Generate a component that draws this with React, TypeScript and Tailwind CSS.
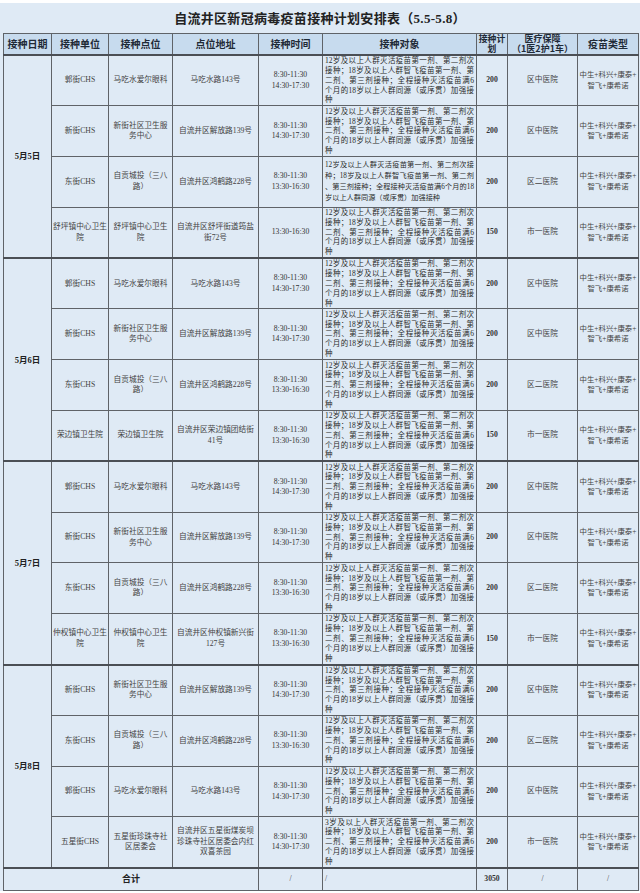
import React from "react";

const A = [
  "12岁及以上人群灭活疫苗第一剂、第二剂次",
  "接种；18岁及以上人群智飞疫苗第一剂、第",
  "二剂、第三剂接种；全程接种灭活疫苗满6",
  "个月的18岁以上人群同源（或序贯）加强接",
  "种",
];
const B = [
  "12岁及以上人群灭活疫苗第一剂、第二剂次接",
  "种；18岁及以上人群智飞疫苗第一剂、第二剂",
  "、第三剂接种；全程接种灭活疫苗满6个月的18",
  "岁以上人群同源（或序贯）加强接种",
];
const C = [
  "3岁及以上人群灭活疫苗第一剂、第二剂次",
  "接种；18岁及以上人群智飞疫苗第一剂、第",
  "二剂、第三剂接种；全程接种灭活疫苗满6",
  "个月的18岁以上人群同源（或序贯）加强接",
  "种",
];

type Row = {
  unit: string[];
  site: string[];
  addr: string[];
  time: string[];
  target: string[];
  plan: string;
  med: string;
};

const T1 = ["8:30-11:30", "14:30-17:30"];
const T2 = ["8:30-11:30", "13:30-16:30"];

const guo: Row = { unit: ["郭街CHS"], site: ["马吃水爱尔眼科"], addr: ["马吃水路143号"], time: T1, target: A, plan: "200", med: "区中医院" };
const xin: Row = { unit: ["新街CHS"], site: ["新街社区卫生服", "务中心"], addr: ["自流井区解放路139号"], time: T1, target: A, plan: "200", med: "区中医院" };
const dong = (t: string[]): Row => ({ unit: ["东街CHS"], site: ["自贡城投（三八", "路）"], addr: ["自流井区鸿鹤路228号"], time: T2, target: t, plan: "200", med: "区二医院" });

const groups: { date: string; rows: Row[] }[] = [
  {
    date: "5月5日",
    rows: [
      guo,
      xin,
      dong(B),
      { unit: ["舒坪镇中心卫生", "院"], site: ["舒坪镇中心卫生", "院"], addr: ["自流井区舒坪街道筠盐", "街72号"], time: ["13:30-16:30"], target: A, plan: "150", med: "市一医院" },
    ],
  },
  {
    date: "5月6日",
    rows: [
      guo,
      xin,
      dong(A),
      { unit: ["荣边镇卫生院"], site: ["荣边镇卫生院"], addr: ["自流井区荣边镇团结街", "41号"], time: T2, target: A, plan: "150", med: "市一医院" },
    ],
  },
  {
    date: "5月7日",
    rows: [
      guo,
      xin,
      dong(A),
      { unit: ["仲权镇中心卫生", "院"], site: ["仲权镇中心卫生", "院"], addr: ["自流井区仲权镇新兴街", "127号"], time: T2, target: A, plan: "150", med: "市一医院" },
    ],
  },
  {
    date: "5月8日",
    rows: [
      xin,
      dong(A),
      guo,
      { unit: ["五星街CHS"], site: ["五星街珍珠寺社", "区居委会"], addr: ["自流井区五星街煤炭坝", "珍珠寺社区居委会内红", "双喜茶园"], time: T1, target: C, plan: "200", med: "市一医院" },
    ],
  },
];

const Lines = ({ l }: { l: string[] }) => (
  <>
    {l.map((s, i) => (
      <div key={i} className="whitespace-nowrap">
        {s}
      </div>
    ))}
  </>
);

const Justified = ({ l }: { l: string[] }) => (
  <>
    {l.map((s, i) => (
      <div
        key={i}
        className={
          "whitespace-nowrap " +
          (i < l.length - 1 ? "text-justify [text-align-last:justify]" : "text-left")
        }
      >
        {s}
      </div>
    ))}
  </>
);

const td = "border border-[#5f6368] text-center align-middle p-0";
const th = "border border-[#5f6368] text-center align-middle p-0 font-bold text-[#1f2a37] bg-[#c7dbee]";

const SERIF = '"Liberation Serif", "Noto Sans CJK SC", serif';
const SANS = '"Noto Sans CJK SC", "Liberation Sans", sans-serif';

export default function App() {
  return (
    <div className="w-[640px] h-[893px] bg-white pt-[3px]">
      <div className="bg-[#dfeaf5] w-[640px] text-[#444]" style={{ fontFamily: SERIF }}>
        <div className="h-[30px] flex items-center justify-center text-[13px] text-[#222] font-bold tracking-[0.3px] pt-[1px]">
          自流井区新冠病毒疫苗接种计划安排表（5.5-5.8）
        </div>
        <table className="ml-[3px] w-[635px] table-fixed border-collapse">
          <colgroup>
            <col className="w-[48px]" />
            <col className="w-[57px]" />
            <col className="w-[64px]" />
            <col className="w-[86px]" />
            <col className="w-[64px]" />
            <col className="w-[154px]" />
            <col className="w-[31px]" />
            <col className="w-[70px]" />
            <col className="w-[61px]" />
          </colgroup>
          <thead style={{ fontFamily: SANS }}>
            <tr className="h-[21px]">
              <th className={th + " text-[10px] leading-[12px]"}>接种日期</th>
              <th className={th + " text-[10px] leading-[12px]"}>接种单位</th>
              <th className={th + " text-[10px] leading-[12px]"}>接种点位</th>
              <th className={th + " text-[10px] leading-[12px]"}>点位地址</th>
              <th className={th + " text-[10px] leading-[12px]"}>接种时间</th>
              <th className={th + " text-[10px] leading-[12px]"}>接种对象</th>
              <th className={th + " text-[8.8px] leading-[10px]"}>
                <div>接种计</div>
                <div>划</div>
              </th>
              <th className={th + " text-[9px] leading-[10px]"}>
                <div>医疗保障</div>
                <div>（1医2护1车）</div>
              </th>
              <th className={th + " text-[10px] leading-[12px]"}>疫苗类型</th>
            </tr>
          </thead>
          <tbody className="text-[7.7px] leading-[10.5px]">
            {groups.map((g, gi) =>
              g.rows.map((r, ri) => (
                <tr key={gi + "-" + ri} className={"h-[50.8px]" + (ri === 0 ? " border-t-2 border-t-[#4b4f55]" : "")}>
                  {ri === 0 && (
                    <td rowSpan={4} className={td + " font-bold text-[#222] text-[8.5px]"} style={{ fontFamily: SERIF }}>
                      {g.date}
                    </td>
                  )}
                  <td className={td}>
                    <Lines l={r.unit} />
                  </td>
                  <td className={td}>
                    <Lines l={r.site} />
                  </td>
                  <td className={td}>
                    <Lines l={r.addr} />
                  </td>
                  <td className={td + " text-[#333]"}>
                    <Lines l={r.time} />
                  </td>
                  <td
                    className={
                      td +
                      " text-left px-[2px] leading-[9.8px] text-[#2a2a2a] " +
                      (r.target === B ? "text-[7.2px] leading-[11px]" : "text-[7.5px]")
                    }
                  >
                    <Justified l={r.target} />
                  </td>
                  <td className={td + " font-bold text-[#333]"}>{r.plan}</td>
                  <td className={td}>{r.med}</td>
                  <td className={td + " text-[7.4px] leading-[10.5px]"}>
                    <Lines l={["中生+科兴+康泰+", "智飞+康希诺"]} />
                  </td>
                </tr>
              ))
            )}
            <tr className="h-[23px] border-t-2 border-t-[#4b4f55]">
              <td colSpan={4} className={td + " font-bold text-[#222] text-[9px]"} style={{ fontFamily: SANS }}>
                合计
              </td>
              <td className={td}>/</td>
              <td className={td + " text-left pl-[2px]"}>/</td>
              <td className={td + " font-bold text-[#333]"}>3050</td>
              <td className={td}>/</td>
              <td className={td}>/</td>
            </tr>
          </tbody>
        </table>
      </div>
    </div>
  );
}
